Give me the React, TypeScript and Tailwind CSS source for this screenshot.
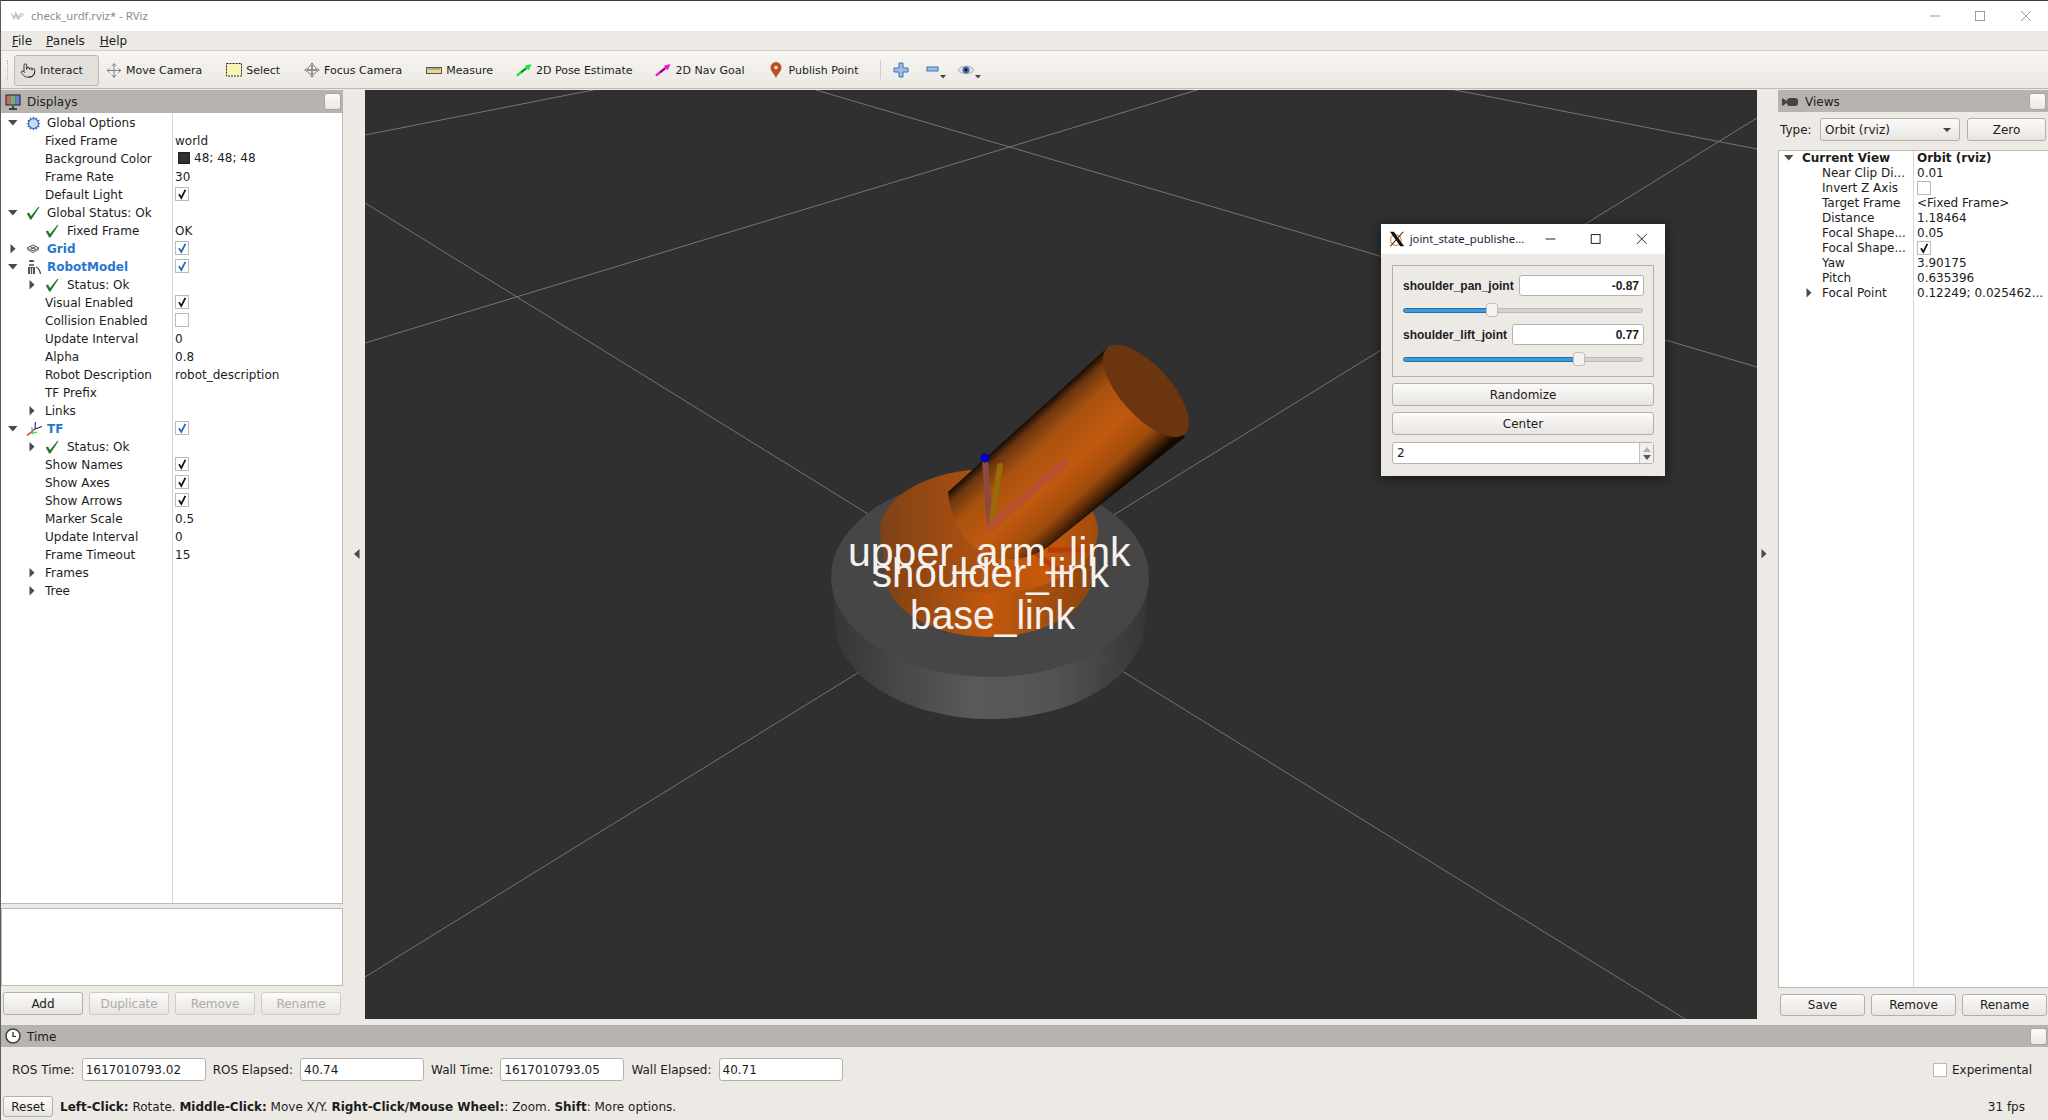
import React from "react";
import { Cog, Move, Pointer } from "lucide-react";

type TreeRow = {
  name: string;
  value?: string;
  level: 0 | 1;
  arrow?: "down" | "right";
  icon?: "gear" | "check" | "grid" | "robot" | "tf";
  box?: "on" | "off" | "blue";
  swatch?: boolean;
  blue?: boolean;
};

const displayRows: TreeRow[] = [
  { name: "Global Options", level: 0, arrow: "down", icon: "gear" },
  { name: "Fixed Frame", value: "world", level: 1 },
  { name: "Background Color", value: "48; 48; 48", swatch: true, level: 1 },
  { name: "Frame Rate", value: "30", level: 1 },
  { name: "Default Light", box: "on", level: 1 },
  { name: "Global Status: Ok", level: 0, arrow: "down", icon: "check" },
  { name: "Fixed Frame", value: "OK", level: 1, icon: "check" },
  { name: "Grid", level: 0, arrow: "right", icon: "grid", box: "blue", blue: true },
  { name: "RobotModel", level: 0, arrow: "down", icon: "robot", box: "blue", blue: true },
  { name: "Status: Ok", level: 1, arrow: "right", icon: "check" },
  { name: "Visual Enabled", box: "on", level: 1 },
  { name: "Collision Enabled", box: "off", level: 1 },
  { name: "Update Interval", value: "0", level: 1 },
  { name: "Alpha", value: "0.8", level: 1 },
  { name: "Robot Description", value: "robot_description", level: 1 },
  { name: "TF Prefix", level: 1 },
  { name: "Links", level: 1, arrow: "right" },
  { name: "TF", level: 0, arrow: "down", icon: "tf", box: "blue", blue: true },
  { name: "Status: Ok", level: 1, arrow: "right", icon: "check" },
  { name: "Show Names", box: "on", level: 1 },
  { name: "Show Axes", box: "on", level: 1 },
  { name: "Show Arrows", box: "on", level: 1 },
  { name: "Marker Scale", value: "0.5", level: 1 },
  { name: "Update Interval", value: "0", level: 1 },
  { name: "Frame Timeout", value: "15", level: 1 },
  { name: "Frames", level: 1, arrow: "right" },
  { name: "Tree", level: 1, arrow: "right" },
];

const viewRows: { name: string; value?: string; box?: "on" | "off"; arrow?: boolean }[] = [
  { name: "Near Clip Di...", value: "0.01" },
  { name: "Invert Z Axis", box: "off" },
  { name: "Target Frame", value: "<Fixed Frame>" },
  { name: "Distance", value: "1.18464" },
  { name: "Focal Shape...", value: "0.05" },
  { name: "Focal Shape...", box: "on" },
  { name: "Yaw", value: "3.90175" },
  { name: "Pitch", value: "0.635396" },
  { name: "Focal Point", value: "0.12249; 0.025462...", arrow: true },
];

const ArrowDown = () => (
  <svg width="10" height="6" viewBox="0 0 10 6">
    <path d="M0 0H9.5L4.8 5.5Z" fill="#4a4a4a" />
  </svg>
);

const ArrowRight = () => (
  <svg width="6" height="10" viewBox="0 0 6 10">
    <path d="M0.5 0V9.5L5.5 4.8Z" fill="#4a4a4a" />
  </svg>
);

const Tick = ({ color = "#111" }: { color?: string }) => (
  <svg width="12" height="12" viewBox="0 0 12 12">
    <path d="M3 6.2L5.3 10L9.4 1.8" fill="none" stroke={color} strokeWidth="1.7" />
  </svg>
);

const CheckBox = ({ state }: { state: "on" | "off" | "blue" }) => (
  <div className="w-[14px] h-[14px] bg-white border border-[#bdbab6] flex items-center justify-center">
    {state === "on" && <Tick />}
    {state === "blue" && <Tick color="#1f66c0" />}
  </div>
);

const GreenCheck = () => (
  <svg width="14" height="14" viewBox="0 0 14 14">
    <path d="M0.8 7.5L3 6.5L5 10L12.5 0.8L13.4 1.2L5.4 13.6H4.2Z" fill="#1d7a2a" />
  </svg>
);

const GridIcon = () => (
  <svg width="14" height="12" viewBox="0 0 14 12">
    <path d="M7 2L13 5L7 8L1 5Z M4 3.5L10 6.5 M10 3.5L4 6.5" fill="none" stroke="#444" strokeWidth="0.9" />
    <path d="M1 6.5L7 9.5L13 6.5" fill="none" stroke="#666" strokeWidth="0.9" />
  </svg>
);

const RobotIcon = () => (
  <svg width="16" height="16" viewBox="0 0 16 16">
    <rect x="3" y="1" width="5" height="2" rx="1" fill="#2c4f8f" />
    <rect x="3" y="5" width="5" height="2" fill="#777" />
    <rect x="2" y="8" width="7" height="7" fill="#555" />
    <rect x="4" y="9" width="1" height="6" fill="#ddd" />
    <rect x="6" y="9" width="1" height="6" fill="#ddd" />
    <path d="M10 8C13 9 14 12 14.5 15" fill="none" stroke="#444" strokeWidth="1.3" />
  </svg>
);

const TfIcon = () => (
  <svg width="17" height="16" viewBox="0 0 17 16">
    <path d="M9 8L1 14.5" stroke="#e01515" strokeWidth="1.2" />
    <path d="M9 8L16 5.5" stroke="#111" strokeWidth="1" />
    <path d="M9 8L9.5 1" stroke="#1a35d0" strokeWidth="1.2" />
    <path d="M6 6V12.5L11 11" fill="none" stroke="#1fcf2a" strokeWidth="1.1" />
  </svg>
);

const TreeIcon = ({ icon }: { icon: NonNullable<TreeRow["icon"]> }) => {
  if (icon === "gear") return <Cog size={15} color="#3f73c4" fill="#c9daf3" strokeWidth={2} />;
  if (icon === "check") return <GreenCheck />;
  if (icon === "grid") return <GridIcon />;
  if (icon === "robot") return <RobotIcon />;
  return <TfIcon />;
};

const DisplayRow = ({ row }: { row: TreeRow }) => (
  <div className="flex h-[18px] items-center">
    <div className="w-[171px] h-full flex items-center border-r border-[#d6d6d6] box-content">
      <div className="w-[25px] h-full flex items-center pl-[7px]">
        {row.level === 0 && row.arrow === "down" && <ArrowDown />}
        {row.level === 0 && row.arrow === "right" && <span className="pl-[2px] flex"><ArrowRight /></span>}
      </div>
      {row.level === 0 ? (
        <div className="w-[21px] flex items-center">{row.icon && <TreeIcon icon={row.icon} />}</div>
      ) : (
        <div className="w-[19px] flex items-center pl-[3px]">{row.arrow && <ArrowRight />}</div>
      )}
      {row.level === 1 && row.icon && (
        <div className="w-[22px] flex items-center"><TreeIcon icon={row.icon} /></div>
      )}
      <span className={row.blue ? "font-bold text-[#2a76cf]" : ""}>{row.name}</span>
    </div>
    <div className={`flex-1 pl-[2px] flex items-center ${row.swatch ? "pb-[2px]" : ""}`}>
      {row.box && <div className="mb-[2px]"><CheckBox state={row.box} /></div>}
      {row.swatch && <div className="w-[12px] h-[12px] bg-[#303030] border border-[#222] ml-[3px] mr-[4px]" />}
      {row.value && <span>{row.value}</span>}
    </div>
  </div>
);

const QtButton = ({ label, disabled, className }: { label: string; disabled?: boolean; className?: string }) => (
  <div
    className={`flex items-center justify-center rounded-[3px] border bg-gradient-to-b from-[#fcfbfa] to-[#e8e5e1] ${
      disabled ? "border-[#cfccc8] text-[#aeaba8]" : "border-[#b3b0ab]"
    } ${className ?? ""}`}>
    {label}
  </div>
);

const DockButton = () => (
  <div className="w-[17px] h-[17px] rounded-[3px] border border-[#a9a6a1] bg-gradient-to-b from-[#fcfbfa] to-[#ebe8e4]" />
);

const ToolItem = ({
  icon,
  label,
  active,
  className,
}: {
  icon: React.ReactNode;
  label: string;
  active?: boolean;
  className?: string;
}) => (
  <div
    className={`flex items-center h-[31px] mt-[1px] gap-[4px] text-[11px] ${
      active ? "w-[85px] pl-[5px] rounded-[3px] border border-[#bcb9b4] bg-[#e3e0dc]" : ""
    } ${className ?? ""}`}>
    <span className="w-[16px] flex justify-center">{icon}</span>
    <span className="pt-[1px]">{label}</span>
  </div>
);

const SelectIcon = () => (
  <svg width="16" height="14" viewBox="0 0 16 14">
    <rect x="0.5" y="0.5" width="15" height="12.5" fill="#fbf5b4" stroke="#222" strokeDasharray="2 1" />
  </svg>
);

const FocusIcon = () => (
  <svg width="18" height="18" viewBox="0 0 18 18" fill="none" stroke="#777" strokeWidth="1">
    <circle cx="9" cy="9" r="5" />
    <path d="M9 1V17M1 9H17M4 9H14M9 4V14M7 3L9 1L11 3M7 15L9 17L11 15M3 7L1 9L3 11M15 7L17 9L15 11" />
  </svg>
);

const MeasureIcon = () => (
  <svg width="16" height="7" viewBox="0 0 16 7">
    <rect x="0.5" y="0.5" width="15" height="6" fill="#e6d79a" stroke="#555" />
    <path d="M3 1V3M5 1V3M7 1V3M9 1V3M11 1V3M13 1V3" stroke="#555" strokeWidth="0.7" />
  </svg>
);

const PoseArrow = ({ color, core }: { color: string; core: string }) => (
  <svg width="17" height="14" viewBox="0 0 17 14">
    <path d="M1 13L14 2.5" stroke={color} strokeWidth="2.6" />
    <path d="M16.5 0.5L9.5 2.5L13.5 7.5Z" fill={color} />
    <path d="M5.5 9.5L10.5 5.5" stroke={core} strokeWidth="1.6" />
  </svg>
);

const PinIcon = () => (
  <svg width="12" height="16" viewBox="0 0 12 16">
    <path d="M6 16C4.5 12 0.5 9.5 0.5 5.6A5.5 5.5 0 0 1 11.5 5.6C11.5 9.5 7.5 12 6 16Z" fill="#b9502a" />
    <circle cx="6" cy="5.5" r="1.8" fill="#f0e0c8" />
  </svg>
);

const SmallDrop = () => (
  <svg width="6" height="4" viewBox="0 0 6 4" className="self-end mb-[3px]">
    <path d="M0 0H6L3 3.5Z" fill="#444" />
  </svg>
);

const MonitorIcon = () => (
  <svg width="16" height="16" viewBox="0 0 16 16">
    <rect x="0.5" y="0.5" width="15" height="11" fill="#222" />
    <rect x="1.5" y="1.5" width="4.4" height="9" fill="#c76a6a" />
    <rect x="5.9" y="1.5" width="4.3" height="9" fill="#6fb46f" />
    <rect x="10.2" y="1.5" width="4.3" height="9" fill="#6f7fd0" />
    <path d="M8 12V14M4 15H12" stroke="#222" strokeWidth="1.6" />
  </svg>
);

const XLogo = () => (
  <svg width="16" height="16" viewBox="0 0 16 16">
    <circle cx="7" cy="9" r="5.5" fill="none" stroke="#ef8a3a" strokeWidth="1.2" />
    <path d="M1 0.5H5L15.5 15.5H11.5Z" fill="#111" />
    <path d="M14 0.5H15.2L2 15.5H0.8Z" fill="#111" />
  </svg>
);

const Scene = () => (
  <svg viewBox="365 90 1392 929" className="block w-full h-full">
    <defs>
      <linearGradient id="baseSide" gradientUnits="userSpaceOnUse" x1="832" y1="0" x2="1149" y2="0">
        <stop offset="0" stopColor="#373737" />
        <stop offset="0.45" stopColor="#5e5e5e" />
        <stop offset="0.7" stopColor="#565656" />
        <stop offset="1" stopColor="#363636" />
      </linearGradient>
      <linearGradient id="shoulderSide" gradientUnits="userSpaceOnUse" x1="884" y1="0" x2="1096" y2="0">
        <stop offset="0" stopColor="#7f4214" />
        <stop offset="0.5" stopColor="#c2580d" />
        <stop offset="1" stopColor="#8a440f" />
      </linearGradient>
      <linearGradient id="shoulderTop" gradientUnits="userSpaceOnUse" x1="880" y1="0" x2="1098" y2="0">
        <stop offset="0" stopColor="#7d4117" />
        <stop offset="0.55" stopColor="#b9540e" />
        <stop offset="0.75" stopColor="#c8590a" />
        <stop offset="1" stopColor="#a04c0c" />
      </linearGradient>
      <linearGradient id="armSide" gradientUnits="userSpaceOnUse" x1="1027" y1="420" x2="1103" y2="504">
        <stop offset="0" stopColor="#140a02" />
        <stop offset="0.08" stopColor="#6a3610" />
        <stop offset="0.25" stopColor="#a8520f" />
        <stop offset="0.55" stopColor="#c2590e" />
        <stop offset="0.8" stopColor="#a04c0c" />
        <stop offset="0.93" stopColor="#4a2406" />
        <stop offset="1" stopColor="#140a02" />
      </linearGradient>
    </defs>
    <rect x="365" y="90" width="1392" height="929" fill="#303030" />
    <g stroke="#757575" strokeWidth="1" fill="none">
      <line x1="365" y1="135" x2="593" y2="90" />
      <line x1="365" y1="343" x2="1197" y2="90" />
      <line x1="816" y1="90" x2="1757" y2="367" />
      <line x1="1455" y1="90" x2="1757" y2="149" />
      <line x1="365" y1="203" x2="1685" y2="1019" />
      <line x1="365" y1="977" x2="1757" y2="118" />
    </g>
    <g opacity="0.93">
      <path d="M832 577L835 622A155 97 0 0 0 1145 622L1149 577Z" fill="url(#baseSide)" />
      <ellipse cx="990" cy="577" rx="159" ry="100" fill="#484848" />
    </g>
    <path d="M880 531L886 575A103 62 0 0 0 1092 575L1098 531Z" fill="url(#shoulderSide)" />
    <ellipse cx="989" cy="531" rx="109" ry="62" fill="url(#shoulderTop)" />
    <path d="M1032 550L1060 572M1048 550H1095" stroke="#b83c08" strokeWidth="5" fill="none" />
    <path d="M948 492L1107 348L1185 437L1048 547C1010 572 955 560 948 492Z" fill="url(#armSide)" />
    <ellipse cx="1146" cy="391" rx="58" ry="25" transform="rotate(48 1146 391)" fill="#6b3510" />
    <path d="M990 527L985 460" stroke="#8f4a40" strokeWidth="6" strokeLinecap="round" />
    <circle cx="985" cy="458" r="4.5" fill="#0000c0" />
    <path d="M992 520L1000 466" stroke="#9a6a08" strokeWidth="6" strokeLinecap="round" />
    <path d="M990 527L1064 463" stroke="#b65232" strokeWidth="8" strokeLinecap="round" />
    <g fill="#f4f1ee" fontFamily="'Liberation Sans', sans-serif" fontSize="41">
      <text x="848" y="566">upper_arm_link</text>
      <text x="872" y="587" textLength="237" lengthAdjust="spacingAndGlyphs">shoulder_link</text>
      <text x="910" y="629" textLength="165" lengthAdjust="spacingAndGlyphs">base_link</text>
    </g>
  </svg>
);

const JointRow = ({
  label,
  value,
  inputClass,
  fillClass,
  handleClass,
}: {
  label: string;
  value: string;
  inputClass: string;
  fillClass: string;
  handleClass: string;
}) => (
  <div className="flex flex-col">
    <div className="flex items-center justify-between h-[21px]">
      <span className="font-bold font-['Liberation_Sans',sans-serif]">{label}</span>
      <div
        className={`${inputClass} h-[21px] bg-white border border-[#b5b2ad] rounded-[3px] flex items-center justify-end pr-[4px] font-bold font-['Liberation_Sans',sans-serif]`}>
        {value}
      </div>
    </div>
    <div className="h-[28px] flex items-center">
      <div className="relative w-[240px] h-[5px] rounded-[3px] bg-[#d5d2ce] border border-[#bdbab5]">
        <div className={`${fillClass} h-full rounded-[3px] bg-[#3b9ae0] outline outline-[#1f6fa8]`} />
        <div className={`absolute top-[-6px] ${handleClass} w-[12px] h-[14px] rounded-[3px] bg-[#f4f3f1] border border-[#c2bfba]`} />
      </div>
    </div>
  </div>
);

const JointWindow = () => (
  <div className="absolute left-[1016px] top-[134px] w-[284px] h-[252px] bg-[#edeae6] shadow-[0_2px_12px_rgba(0,0,0,0.6)] flex flex-col">
    <div className="h-[30px] bg-white flex items-center pl-[8px]">
      <XLogo />
      <span className="ml-[5px] w-[113px] whitespace-nowrap font-['Noto_Sans',sans-serif] text-[11.3px] text-[#1b1b3a]">joint_state_publishe...</span>
      <svg width="140" height="16" viewBox="0 0 140 16" className="ml-[5px]" fill="none" stroke="#222" strokeWidth="1">
        <path d="M18 8H28" />
        <rect x="64.5" y="3.5" width="9" height="9" />
        <path d="M111 3L121 13M121 3L111 13" />
      </svg>
    </div>
    <div className="flex-1 px-[11px] pt-[11px] flex flex-col">
      <div className="h-[112px] border border-[#b3b0ab] pl-[10px] pr-[9px] pt-[9px]">
        <JointRow label="shoulder_pan_joint" value="-0.87" inputClass="w-[125px]" fillClass="w-[87px]" handleClass="left-[82px]" />
        <JointRow label="shoulder_lift_joint" value="0.77" inputClass="w-[132px]" fillClass="w-[174px]" handleClass="left-[169px]" />
      </div>
      <QtButton label="Randomize" className="h-[23px] mt-[6px]" />
      <QtButton label="Center" className="h-[23px] mt-[6px]" />
      <div className="h-[22px] mt-[7px] bg-white border border-[#b5b2ad] rounded-[3px] flex items-center justify-between pl-[4px]">
        <span>2</span>
        <div className="w-[14px] h-full border-l border-[#c4c1bc] bg-[#f1efec] flex flex-col items-center justify-center gap-[3px]">
          <svg width="8" height="5" viewBox="0 0 8 5"><path d="M0 5H8L4 0Z" fill="#b0b0b0" /></svg>
          <svg width="8" height="5" viewBox="0 0 8 5"><path d="M0 0H8L4 5Z" fill="#555" /></svg>
        </div>
      </div>
    </div>
  </div>
);

const TimeField = ({ label, value, width }: { label: string; value: string; width: string }) => (
  <>
    <span>{label}</span>
    <div className={`${width} h-[23px] bg-white border border-[#b5b2ad] rounded-[3px] flex items-center pl-[3px]`}>{value}</div>
  </>
);

const App = () => {
  return (
    <div className="w-[2048px] h-[1120px] overflow-hidden flex flex-col bg-[#edeae6] border-l border-[#5c5c5c] font-['DejaVu_Sans',sans-serif] text-[12px] leading-[14px] text-[#1c1c1c]">
      {/* window title */}
      <div className="h-[31px] shrink-0 bg-white border-t border-[#3c3c3c] flex items-center pl-[9px]">
        <svg width="15" height="10" viewBox="0 0 15 10" fill="none" stroke="#b8b8b8" strokeWidth="1">
          <path d="M1 2L4 8L6 2L9 8L11 2L14 4M2 5H13M5 1L8 9" />
        </svg>
        <span className="ml-[6px] font-['Noto_Sans',sans-serif] text-[11.3px] text-[#8c8c8c]">check_urdf.rviz* - RViz</span>
        <svg width="148" height="16" viewBox="0 0 148 16" className="ml-auto" fill="none" stroke="#999" strokeWidth="1">
          <path d="M30 8H40" />
          <rect x="75.5" y="3.5" width="9" height="9" />
          <path d="M121 3L131 13M131 3L121 13" />
        </svg>
      </div>

      {/* menu */}
      <div className="h-[20px] shrink-0 border-b border-[#d2cfca] flex items-center gap-[14px] pl-[11px]">
        <span><span className="underline">F</span>ile</span>
        <span><span className="underline">P</span>anels</span>
        <span className="ml-[1px]"><span className="underline">H</span>elp</span>
      </div>

      {/* toolbar */}
      <div className="h-[38px] shrink-0 bg-gradient-to-b from-[#f7f5f1] to-[#ece9e4] border-b border-[#bdbab5] flex items-center pl-[6px]">
        <div className="w-[3px] h-[20px] border-l border-dotted border-[#b5b2ad] mr-[4px]" />
        <ToolItem active label="Interact" icon={<Pointer size={17} strokeWidth={1.2} color="#111" />} />
        <div className="flex items-center gap-[24px] ml-[7px]">
          <ToolItem label="Move Camera" icon={<Move size={17} strokeWidth={1.2} color="#666" />} />
          <ToolItem label="Select" icon={<SelectIcon />} />
          <ToolItem label="Focus Camera" icon={<FocusIcon />} />
          <ToolItem label="Measure" icon={<MeasureIcon />} />
          <ToolItem label="2D Pose Estimate" className="ml-[-1px]" icon={<PoseArrow color="#18e83a" core="#0a7a1e" />} />
          <ToolItem label="2D Nav Goal" className="ml-[-1px]" icon={<PoseArrow color="#f018d8" core="#7a0a6e" />} />
          <ToolItem label="Publish Point" icon={<PinIcon />} />
        </div>
        <div className="w-px h-[19px] bg-[#d0cdc8] ml-[21px]" />
        <div className="flex items-center h-[24px] ml-[12px]">
          <svg width="16" height="16" viewBox="0 0 16 16">
            <path d="M6 1H10V6H15V10H10V15H6V10H1V6H6Z" fill="#9dbde6" stroke="#3f73b8" strokeWidth="1" />
          </svg>
          <svg width="14" height="7" viewBox="0 0 14 7" className="ml-[17px]">
            <rect x="1" y="1" width="11" height="4" fill="#9dbde6" stroke="#3f73b8" />
          </svg>
          <SmallDrop />
          <svg width="18" height="12" viewBox="0 0 18 12" className="ml-[11px]">
            <path d="M1 6C4 1 14 1 17 6C14 11 4 11 1 6Z" fill="#e4e4ea" stroke="#aaa" />
            <circle cx="9" cy="6" r="3.5" fill="#4a69b0" />
            <circle cx="9" cy="6" r="1.4" fill="#111" />
          </svg>
          <SmallDrop />
        </div>
      </div>

      {/* main area */}
      <div className="mt-[1px] h-[929px] shrink-0 flex">
        <div className="w-[342px] shrink-0 flex flex-col">
          <div className="h-[23px] bg-[#b7b3ae] flex items-center pl-[4px] pr-[2px]">
            <MonitorIcon />
            <span className="ml-[6px]">Displays</span>
            <div className="ml-auto"><DockButton /></div>
          </div>
          <div className="h-[791px] pt-[1px] bg-white border-r border-b border-[#bdbab5] flex flex-col">
            {displayRows.map((row, i) => (
              <DisplayRow key={i} row={row} />
            ))}
            <div className="flex-1 ml-[171px] border-l border-[#d6d6d6]" />
          </div>
          <div className="h-[78px] mt-[4px] bg-white border border-[#bdbab5]" />
          <div className="flex gap-[6px] mt-[6px] pl-[2px]">
            <QtButton label="Add" className="w-[80px] h-[23px]" />
            <QtButton label="Duplicate" disabled className="w-[80px] h-[23px]" />
            <QtButton label="Remove" disabled className="w-[80px] h-[23px]" />
            <QtButton label="Rename" disabled className="w-[80px] h-[23px]" />
          </div>
        </div>

        <div className="w-[22px] shrink-0 flex items-center pl-[11px] pb-[1px]">
          <svg width="6" height="10" viewBox="0 0 6 10"><path d="M5.5 0V10L0 5Z" fill="#4a4a4a" /></svg>
        </div>

        <div className="relative w-[1392px] shrink-0">
          <Scene />
          <JointWindow />
        </div>

        <div className="w-[21px] shrink-0 flex items-center pl-[4px] pb-[1px]">
          <ArrowRight />
        </div>

        <div className="w-[270px] shrink-0 flex flex-col">
          <div className="h-[22px] pt-[1px] bg-[#b7b3ae] flex items-center pl-[4px] pr-[2px]">
            <svg width="16" height="10" viewBox="0 0 16 10">
              <path d="M0 1L5 4V6L0 9Z" fill="#444" />
              <rect x="5" y="1" width="11" height="8" rx="3" fill="#444" />
            </svg>
            <span className="ml-[7px]">Views</span>
            <div className="ml-auto"><DockButton /></div>
          </div>
          <div className="h-[23px] mt-[6px] flex items-center pl-[2px]">
            <span className="w-[40px]">Type:</span>
            <div className="w-[140px] h-full bg-gradient-to-b from-[#fcfbfa] to-[#e8e5e1] border border-[#b3b0ab] rounded-[3px] flex items-center justify-between pl-[4px] pr-[8px]">
              <span>Orbit (rviz)</span>
              <svg width="8" height="4" viewBox="0 0 8 4"><path d="M0 0H8L4 4Z" fill="#444" /></svg>
            </div>
            <QtButton label="Zero" className="w-[79px] h-full ml-[7px]" />
          </div>
          <div className="h-[838px] mt-[9px] bg-white border-l border-t border-b border-[#bdbab5] flex flex-col">
            <div className="h-[14px] flex items-center font-bold">
              <div className="w-[134px] h-full flex items-center border-r border-[#d6d6d6] box-content">
                <span className="ml-[5px] w-[18px] flex"><ArrowDown /></span>
                <span>Current View</span>
              </div>
              <span className="pl-[3px]">Orbit (rviz)</span>
            </div>
            {viewRows.map((row, i) => (
              <div key={i} className="h-[15px] flex items-center">
                <div className="w-[134px] h-full flex items-center border-r border-[#d6d6d6] box-content">
                  <span className="w-[27px]" />
                  <span className="w-[16px] flex">{row.arrow && <ArrowRight />}</span>
                  <span className="whitespace-nowrap">{row.name}</span>
                </div>
                <div className="pl-[3px] flex items-center whitespace-nowrap">
                  {row.box ? <CheckBox state={row.box} /> : <span>{row.value}</span>}
                </div>
              </div>
            ))}
            <div className="flex-1 ml-[134px] border-l border-[#d6d6d6]" />
          </div>
          <div className="flex gap-[6px] mt-[6px] pl-[2px]">
            <QtButton label="Save" className="w-[85px] h-[22px]" />
            <QtButton label="Remove" className="w-[85px] h-[22px]" />
            <QtButton label="Rename" className="w-[85px] h-[22px]" />
          </div>
        </div>
      </div>

      {/* time panel */}
      <div className="h-[22px] shrink-0 mt-[6px] bg-[#b7b3ae] flex items-center pl-[4px] pr-[1px]">
        <svg width="16" height="16" viewBox="0 0 16 16">
          <circle cx="8" cy="8" r="7" fill="#fff" stroke="#444" strokeWidth="1.6" />
          <path d="M8 4V8.5H11" fill="none" stroke="#222" strokeWidth="1.2" />
        </svg>
        <span className="ml-[6px] pt-[1px]">Time</span>
        <div className="ml-auto"><DockButton /></div>
      </div>
      <div className="h-[45px] shrink-0 flex items-center pl-[11px] pr-[16px] gap-[7px]">
        <TimeField label="ROS Time:" value="1617010793.02" width="w-[124px]" />
        <TimeField label="ROS Elapsed:" value="40.74" width="w-[124px]" />
        <TimeField label="Wall Time:" value="1617010793.05" width="w-[124px]" />
        <TimeField label="Wall Elapsed:" value="40.71" width="w-[124px]" />
        <div className="ml-auto flex items-center gap-[5px]">
          <CheckBox state="off" />
          <span>Experimental</span>
        </div>
      </div>
      <div className="h-[28px] shrink-0 flex items-start pl-[2px] pt-[4px] relative">
        <QtButton label="Reset" className="w-[50px] h-[21px]" />
        <span className="ml-[7px] leading-[22px]">
          <b>Left-Click:</b> Rotate. <b>Middle-Click:</b> Move X/Y. <b>Right-Click/Mouse Wheel:</b>: Zoom. <b>Shift</b>: More options.
        </span>
        <span className="ml-auto mr-[23px] leading-[22px]">31 fps</span>
      </div>
    </div>
  );
};

export default App;
